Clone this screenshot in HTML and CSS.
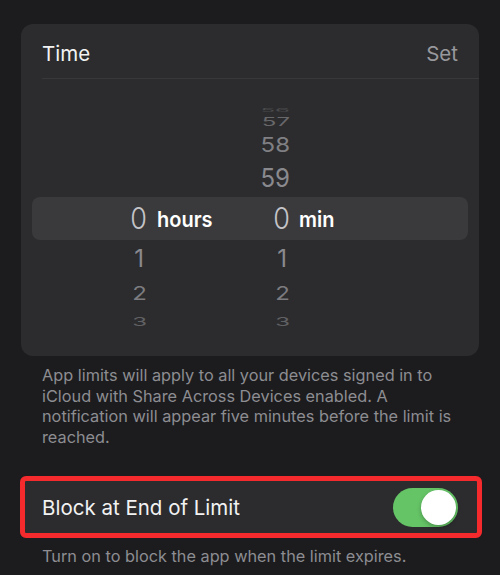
FILE: index.html
```html
<!DOCTYPE html>
<html>
<head>
<meta charset="utf-8">
<link rel="stylesheet" href="styles.css">
</head>
<body>
<div class="card">
  <div class="header">
    <span class="title">Time</span>
    <span class="set">Set</span>
  </div>
  <div class="sep"></div>
  <div class="picker">
    <div class="row r56"><span></span><span></span><span class="d">56</span><span></span></div>
    <div class="row r57"><span></span><span></span><span class="d">57</span><span></span></div>
    <div class="row r58"><span></span><span></span><span class="d">58</span><span></span></div>
    <div class="row r59"><span></span><span></span><span class="d">59</span><span></span></div>
    <div class="row sel"><span class="d">0</span><span class="lbl">hours</span><span class="d">0</span><span class="lbl">min</span></div>
    <div class="row r1"><span class="d">1</span><span></span><span class="d">1</span><span></span></div>
    <div class="row r2"><span class="d">2</span><span></span><span class="d">2</span><span></span></div>
    <div class="row r3"><span class="d">3</span><span></span><span class="d">3</span><span></span></div>
    <div class="row r4"><span class="d">4</span><span></span><span class="d">4</span><span></span></div>
  </div>
</div>
<p class="note first">App limits will apply to all your devices signed in to<br>iCloud with Share Across Devices enabled. A<br>notification will appear five minutes before the limit is<br>reached.</p>
<div class="block">
  <span class="block-label">Block at End of Limit</span>
  <span class="toggle"><span class="knob"></span></span>
</div>
<p class="note second">Turn on to block the app when the limit expires.</p>
</body>
</html>
```

FILE: styles.css
```css
html, body {
  margin: 0;
  background: #1c1c1e;
}
body {
  padding: 24px 21px 0;
  font-family: Inter, "Noto Sans", sans-serif;
  color: #fff;
  overflow: hidden;
  height: 575px;
  box-sizing: border-box;
}
.card {
  background: #2c2c2e;
  border-radius: 12px;
  overflow: hidden;
}
.header {
  height: 54px;
  box-sizing: border-box;
  padding: 4px 21px 0;
  display: flex;
  align-items: center;
  justify-content: space-between;
}
.title {
  font-size: 20.5px;
  color: #f2f2f2;
}
.set {
  font-size: 20.5px;
  color: #98989d;
}
.sep {
  height: 1px;
  margin-left: 21px;
  background: #38383a;
}
.picker {
  padding: 24px 0 21px;
  display: flex;
  flex-direction: column;
}
.row {
  display: grid;
  grid-template-columns: 37px 103px 40px 1fr;
  padding-left: 89px;
  align-items: center;
}
.row .d {
  text-align: right;
  font-size: 24px;
  display: block;
  line-height: 1;
  color: #8a8a8e;
}
.r56 { height: 10px; overflow: hidden; }
.r56 .d { transform: translateY(-5px) scaleY(0.22); color: #4a4a4c; }
.r57 { height: 10px; }
.r57 .d { transform: translateY(-3px) scaleY(0.5); color: #68686b; }
.r58 { height: 43px; }
.r58 .d { transform: scaleY(0.85); color: #808084; }
.r59 { height: 24px; }
.r59 .d { transform: scaleY(1.08); color: #8a8a8e; }
.sel {
  height: 43px;
  margin: 7px 11px 0;
  padding-left: 78px;
  background: #3a3a3c;
  border-radius: 8px;
}
.sel .d {
  font-size: 27px;
  font-weight: 300;
  color: #c4c4c8;
  transform: scaleY(1.1);
}
.sel .lbl {
  font-size: 20px;
  font-weight: 600;
  color: #fff;
  padding-left: 10px;
  transform: scaleY(1.08);
}
.sel .lbl:last-child { padding-left: 9px; }
.r1 { height: 38px; }
.r1 .d { transform: translateX(-3px) scaleY(1.0); color: #8a8a8e; }
.r2 { height: 32px; }
.r2 .d { transform: scaleY(0.78); color: #7c7c80; }
.r3 { height: 17px; }
.r3 .d { transform: scaleY(0.5); color: #616164; }
.r4 { height: 8px; overflow: hidden; }
.r4 .d { transform: translateY(2px) scaleY(0.2); color: #444446; }
.note {
  margin: 0;
  padding: 0 21px;
  font-size: 16.3px;
  line-height: 20.5px;
  color: #8d8d92;
}
.note.first { padding-top: 9px; }
.block {
  margin: 29px -3px 0 -1px;
  height: 52px;
  border: 5px solid #f52a2d;
  border-radius: 6px;
  background: #2c2c2e;
  display: flex;
  align-items: center;
  justify-content: space-between;
  padding: 0 19px 0 17px;
}
.block-label {
  font-size: 20.5px;
  color: #f2f2f2;
}
.toggle {
  width: 65px;
  height: 39px;
  border-radius: 20px;
  background: #65c466;
  display: flex;
  align-items: center;
  justify-content: flex-end;
  padding-right: 2px;
  box-sizing: border-box;
}
.knob {
  width: 35px;
  height: 35px;
  border-radius: 50%;
  background: #fff;
  box-shadow: 0 2px 4px rgba(0,0,0,0.25);
}
.note.second { padding-top: 8px; }
```
